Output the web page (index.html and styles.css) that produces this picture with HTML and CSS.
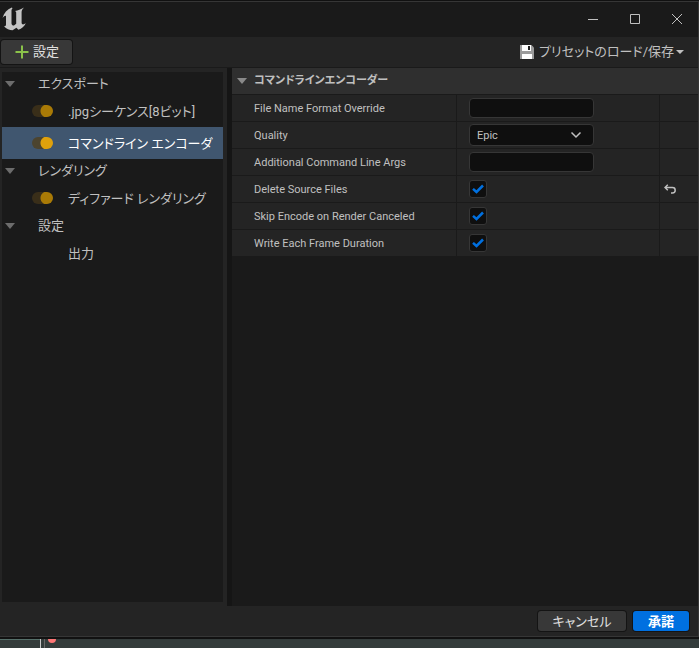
FILE: index.html
```html
<!DOCTYPE html>
<html lang="ja">
<head>
<meta charset="utf-8">
<title>設定</title>
<link rel="stylesheet" href="styles.css">
</head>
<body>
<div class="window">
  <header class="titlebar">
    <svg class="logo" viewBox="0 0 24 24" aria-hidden="true"><path d="M0.500 11C2 6 5 2.500 9.800 0.600L10.600 1.300C9.800 2 9.500 2.800 9.500 4V16.500C9.800 18 10.800 18.700 12 18.500L14.200 16.800V5.600C14 4.700 13.700 4.200 13 3.900C16 3.600 18.800 2.600 22 0.600C20.400 2.300 19.600 3.600 19.600 5.200V15.800C19.800 17.600 21.200 18 23.800 16.300C22.200 19.500 19.800 21.500 16.400 22.800L14.400 20.800L10.600 23.300C7.600 23.200 4.200 22.200 2 19.300C3.500 19.400 4 18.800 4 17.600V9.200C3.500 8.200 2.400 8.800 0.500 11Z"/></svg>
    <div class="window-controls">
      <button aria-label="最小化"><svg viewBox="0 0 12 12"><path d="M1 6.500H11"/></svg></button>
      <button aria-label="最大化"><svg viewBox="0 0 12 12"><path d="M1.500 1.500H10.500V10.500H1.500Z"/></svg></button>
      <button aria-label="閉じる"><svg viewBox="0 0 12 12"><path d="M1 1L11 11M11 1L1 11"/></svg></button>
    </div>
  </header>

  <div class="toolbar">
    <button class="button add"><svg viewBox="0 0 14 14" aria-hidden="true"><path d="M7 0.500V13.500M0.500 7H13.500"/></svg>設定</button>
    <button class="preset">
      <svg class="disk" viewBox="0 0 14 14" aria-hidden="true"><path d="M0 0H11.500L14 2.500V14H0Z" fill="#9b9b9b"/><path d="M2 0H11V6H2ZM2 9H12V14H2Z" fill="#fff"/><path d="M8 1H10V5H8Z" fill="#222"/></svg>
      <span>プリセットのロード/保存</span>
      <svg class="caret" viewBox="0 0 8 4" aria-hidden="true"><path d="M0 0H8L4 4Z"/></svg>
    </button>
  </div>

  <main class="content">
    <nav class="tree">
      <div class="category"><svg class="arrow" viewBox="0 0 10 6"><path d="M0 0H10L5 6Z"/></svg>エクスポート</div>
      <label class="item"><input class="switch" type="checkbox" checked>.jpgシーケンス[8ビット]</label>
      <label class="item selected"><input class="switch" type="checkbox" checked>コマンドライン エンコーダ</label>
      <div class="category"><svg class="arrow" viewBox="0 0 10 6"><path d="M0 0H10L5 6Z"/></svg>レンダリング</div>
      <label class="item"><input class="switch" type="checkbox" checked>ディファード レンダリング</label>
      <div class="category"><svg class="arrow" viewBox="0 0 10 6"><path d="M0 0H10L5 6Z"/></svg>設定</div>
      <div class="item plain">出力</div>
    </nav>

    <section class="details">
      <h2><svg class="arrow" viewBox="0 0 10 6"><path d="M0 0H10L5 6Z"/></svg>コマンドラインエンコーダー</h2>
      <div class="row">
        <label for="format">File Name Format Override</label>
        <div class="value"><input class="field" id="format" type="text"></div>
        <div class="reset"></div>
      </div>
      <div class="row">
        <label for="quality">Quality</label>
        <div class="value"><div class="combo">
          <select class="field" id="quality"><option>Epic</option></select>
          <svg viewBox="0 0 10 6" aria-hidden="true"><path d="M0.500 0.500L5 5L9.500 0.500"/></svg>
        </div></div>
        <div class="reset"></div>
      </div>
      <div class="row">
        <label for="args">Additional Command Line Args</label>
        <div class="value"><input class="field" id="args" type="text"></div>
        <div class="reset"></div>
      </div>
      <div class="row">
        <label for="delete">Delete Source Files</label>
        <div class="value"><span class="check"><input id="delete" type="checkbox" checked><svg viewBox="0 0 12 10" aria-hidden="true"><path d="M1 4.800L4.500 8L11 1.500"/></svg></span></div>
        <div class="reset"><button aria-label="リセット"><svg viewBox="0 0 12 10"><path d="M3.800 0.800L1 3.500L3.800 6.200M1 3.500H8.500C10.200 3.500 11.200 4.500 11.200 6.200C11.200 7.900 10.200 8.900 8.500 8.900H7"/></svg></button></div>
      </div>
      <div class="row">
        <label for="skip">Skip Encode on Render Canceled</label>
        <div class="value"><span class="check"><input id="skip" type="checkbox" checked><svg viewBox="0 0 12 10" aria-hidden="true"><path d="M1 4.800L4.500 8L11 1.500"/></svg></span></div>
        <div class="reset"></div>
      </div>
      <div class="row">
        <label for="duration">Write Each Frame Duration</label>
        <div class="value"><span class="check"><input id="duration" type="checkbox" checked><svg viewBox="0 0 12 10" aria-hidden="true"><path d="M1 4.800L4.500 8L11 1.500"/></svg></span></div>
        <div class="reset"></div>
      </div>
    </section>
  </main>

  <footer class="actions">
    <button class="button cancel">キャンセル</button>
    <button class="button accept">承諾</button>
  </footer>
</div>
<div class="timeline"><span class="played"></span><span class="playhead"></span><span class="marker"></span></div>
</body>
</html>
```

FILE: styles.css
```css
* { box-sizing: border-box; }

body {
  margin: 0;
  min-height: 100vh;
  display: flex;
  flex-direction: column;
  background: #111;
  color: #c0c0c0;
  font: 13px/20px Roboto, "Noto Sans CJK JP", sans-serif;
  font-feature-settings: "palt";
}

button, input, select { font: inherit; font-feature-settings: inherit; color: inherit; }
button { padding: 0; border: 0; background: none; }
svg { display: block; fill: none; stroke: currentColor; flex: none; }

.window {
  flex: 1;
  display: flex;
  flex-direction: column;
  margin-top: 1px;
  border: 1px solid #363636;
  border-width: 1px 1px 1px 0;
  background: #242424;
}

.titlebar {
  height: 35px;
  display: flex;
  align-items: center;
  justify-content: space-between;
  padding: 0 14px 2px 2px;
  background: #1a1a1a;
}
.logo { width: 24px; height: 24px; fill: #c4c4c4; stroke: none; }
.window-controls { display: flex; gap: 28px; }
.window-controls button { width: 14px; height: 14px; display: grid; place-items: center; }
.window-controls svg { width: 12px; height: 12px; }

.toolbar {
  height: 31px;
  display: flex;
  align-items: center;
  justify-content: space-between;
  padding: 0 14px 0 1px;
  border-bottom: 1px solid #1a1a1a;
}
.button {
  height: 22px;
  border-radius: 3px;
  background: #383838;
  color: #e0e0e0;
  box-shadow: 0 0 0 1px #141414;
}
.add {
  height: 24px;
  display: flex;
  align-items: center;
  gap: 4px;
  padding: 0 13px 0 14px;
}
.add svg { width: 14px; height: 14px; stroke: #8bc24a; stroke-width: 2; }
.preset { display: flex; align-items: center; gap: 5px; }
.disk { width: 14px; height: 14px; stroke: none; }
.caret { width: 8px; height: 4px; margin-left: -3px; fill: #c0c0c0; stroke: none; }

.content { flex: 1; display: flex; }
.tree {
  width: 221px;
  margin: 4px 4px 4px 2px;
  background: #1a1a1a;
}
.category { height: 23px; display: flex; align-items: center; padding-left: 3px; }
.arrow { width: 10px; height: 6px; fill: #6c6c6c; stroke: none; }
.category .arrow { margin-right: 23px; }
.item { height: 32px; display: flex; align-items: center; padding: 1px 0 0 30px; }
.item.plain { padding-left: 66px; }
.item.selected { background: #40566f; color: #fff; }
.switch {
  appearance: none;
  width: 21px;
  height: 12px;
  margin: 0 15px 2px 0;
  border-radius: 6px;
  background: radial-gradient(circle at 15px 6px, #a97a06 6px, transparent 7px), #392e19;
}
.selected .switch { background: radial-gradient(circle at 15px 6px, #e0a10c 6px, transparent 7px), #4c442f; }

.details {
  flex: 1;
  background: #1a1a1a;
  border-left: 5px solid #151515;
}
h2 {
  height: 27px;
  margin: 0;
  display: flex;
  align-items: center;
  gap: 7px;
  padding-left: 5px;
  border-bottom: 1px solid #1a1a1a;
  background: #2f2f2f;
  font-size: 11px;
  font-weight: 700;
}
h2 .arrow { fill: #8a8a8a; }
.row {
  height: 27px;
  display: grid;
  grid-template-columns: 225px 1fr 38px;
  border-bottom: 1px solid #1a1a1a;
  background: #242424;
  font-size: 11px;
}
.row label, .value, .reset { display: flex; align-items: center; }
.row label { padding: 2px 0 0 22px; }
.row label, .value { border-right: 1px solid #1a1a1a; }
.value { padding-left: 12px; }
.reset { padding-left: 4px; }
.field {
  width: 125px;
  height: 20px;
  margin: 0;
  padding: 0 7px;
  border: 1px solid #363636;
  border-radius: 4px;
  background: #0f0f0f;
}
.combo, .check { display: grid; align-items: center; }
.combo > *, .check > * { grid-area: 1 / 1; }
.combo select { appearance: none; height: 22px; padding-top: 1px; }
.combo svg { width: 10px; height: 6px; justify-self: end; margin-right: 13px; overflow: visible; stroke-width: 1.5; pointer-events: none; }
.check { justify-items: center; }
.check input {
  appearance: none;
  width: 18px;
  height: 18px;
  margin: 0;
  border: 1px solid #363636;
  border-radius: 3px;
  background: #0f0f0f;
}
.check svg { width: 12px; height: 10px; stroke: #0070e0; stroke-width: 2.5; pointer-events: none; }
.reset svg { width: 12px; height: 10px; stroke-width: 1.5; }

.actions {
  height: 30px;
  display: flex;
  align-items: center;
  justify-content: flex-end;
  gap: 7px;
  padding-right: 9px;
}
.actions .button { height: 20px; line-height: 20px; padding-top: 1px; }
.cancel { width: 88px; }
.accept { width: 56px; background: #0070e0; color: #fff; font-weight: 700; }

.timeline {
  height: 9px;
  margin-top: 2px;
  display: flex;
  overflow: hidden;
  background: #343c3b;
}
.played { width: 40px; border-top: 1px solid #56706a; }
.playhead { width: 5px; border-left: 1px solid #c8c8c8; border-right: 1px solid #666; }
.marker { width: 8px; height: 4px; margin-left: 3px; border-radius: 0 0 4px 4px; background: #f77; }
```
